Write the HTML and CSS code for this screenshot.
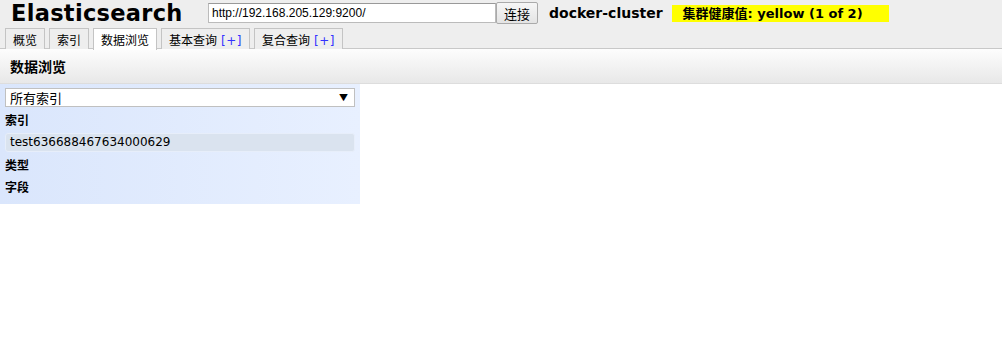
FILE: index.html
```html
<!DOCTYPE html>
<html>
<head>
<meta charset="utf-8">
<link rel="stylesheet" href="styles.css">
</head>
<body>
<div class="header">
  <div class="topbar">
    <h1 class="brand">Elasticsearch</h1>
    <input class="url" type="text" value="http://192.168.205.129:9200/">
    <button class="connect">连接</button>
    <span class="cluster">docker-cluster</span>
    <span class="health">集群健康值: yellow (1 of 2)</span>
  </div>
  <div class="tabs">
    <div class="tab">概览</div>
    <div class="tab">索引</div>
    <div class="tab active">数据浏览</div>
    <div class="tab">基本查询<span class="plus">[+]</span></div>
    <div class="tab">复合查询<span class="plus">[+]</span></div>
  </div>
</div>
<div class="toolbar">数据浏览</div>
<div class="side">
  <div class="select"><span>所有索引</span><span class="arrow">▼</span></div>
  <div class="label">索引</div>
  <div class="item">test636688467634000629</div>
  <div class="label">类型</div>
  <div class="label">字段</div>
</div>
</body>
</html>
```
FILE: styles.css
```css
* { box-sizing: border-box; }
html, body { margin: 0; padding: 0; background: #fff; }
body { font-family: "DejaVu Sans", "Noto Sans CJK SC", sans-serif; font-size: 12px; color: #000; }
.header { background: #eee; border-bottom: 1px solid #c8c8c8; height: 49px; padding-top: 1px; }
.topbar { display: flex; align-items: center; height: 24px; }
.brand { margin: 0 0 0 11px; font-family: "DejaVu Sans", sans-serif; font-size: 22.5px; font-weight: bold; letter-spacing: 0.3px; width: 197px; line-height: 24px; }
.url { width: 288px; height: 20px; margin: 0; border: 1px solid #bbb; border-top-color: #999; padding: 0 3px; font-family: "Liberation Sans", sans-serif; font-size: 12px; background: #fff; }
.connect { height: 22px; width: 42px; margin: 0; padding: 0; border: 1px solid #aaa; border-radius: 2px; background: linear-gradient(#f6f6f6, #e4e4e4); font-family: "Noto Sans CJK SC", sans-serif; font-size: 13px; color: #000; }
.cluster { margin-left: 11px; font-weight: bold; font-size: 14px; font-family: "DejaVu Sans", sans-serif; }
.health { margin-left: 9px; background: #ff0; font-weight: bold; font-size: 13px; padding: 0 9px 0 11px; width: 217px; height: 17px; line-height: 17px; font-family: "DejaVu Sans", "Noto Sans CJK SC", sans-serif; }
.tabs { display: flex; gap: 4px; padding-left: 5px; margin-top: 3px; }
.tab { height: 21px; border: 1px solid #c4c4c4; border-bottom: none; background: #eee; padding: 0 7px; font-family: "Noto Sans CJK SC", sans-serif; font-size: 12px; line-height: 22px; }
.tab.active { background: #fff; height: 22px; }
.plus { color: #33f; font-family: "DejaVu Sans", sans-serif; margin-left: 4px; letter-spacing: 0.5px; }
.toolbar { height: 35px; background: linear-gradient(#fdfdfd, #e8e8e8); border-bottom: 1px solid #ddd; padding-left: 10px; font-family: "Noto Sans CJK SC", sans-serif; font-weight: bold; font-size: 14px; line-height: 35px; }
.side { width: 360px; height: 120px; background: linear-gradient(to right, #dae6fc, #e8f0ff); padding: 4px 5px 0 5px; }
.select { display: flex; justify-content: space-between; align-items: center; height: 19px; background: #fff; border: 1px solid #c0c0c0; padding: 0 6px 0 4px; font-family: "Noto Sans CJK SC", sans-serif; font-size: 13px; }
.arrow { font-size: 9px; }
.label { font-family: "Noto Sans CJK SC", sans-serif; font-weight: bold; font-size: 12px; height: 22px; line-height: 22px; }
.select + .label { margin-top: 2px; }
.item { height: 19px; margin: 2px 0; background: #dae3ef; border: 1px solid #e7eefa; border-radius: 3px; padding-left: 4px; font-size: 12px; line-height: 17px; font-family: "DejaVu Sans", sans-serif; }
```
